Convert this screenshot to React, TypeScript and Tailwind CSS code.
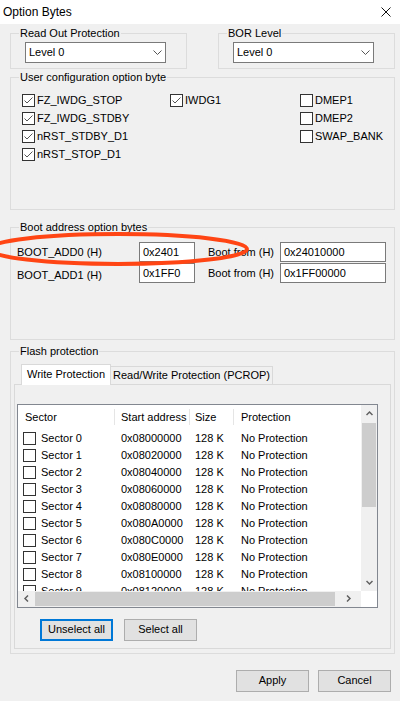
import React from "react";

type Kids = { children?: React.ReactNode };

const sectors = [
  "0x08000000",
  "0x08020000",
  "0x08040000",
  "0x08060000",
  "0x08080000",
  "0x080A0000",
  "0x080C0000",
  "0x080E0000",
  "0x08100000",
  "0x08120000",
];

function Check({ checked }: { checked?: boolean }) {
  return (
    <span className="w-[13px] h-[13px] border border-[#333333] bg-white flex items-center justify-center shrink-0">
      {checked && (
        <svg width="11" height="11" viewBox="0 0 11 11">
          <path d="M1.5 5.5 L4 8 L9.5 2.5" fill="none" stroke="#555555" strokeWidth="1" />
        </svg>
      )}
    </span>
  );
}

function Group({ title, className, children }: Kids & { title: string; className: string }) {
  return (
    <fieldset className={`border border-[#dcdcdc] ${className}`}>
      <legend className="ml-[8px] px-[1px] leading-[13px]">{title}</legend>
      {children}
    </fieldset>
  );
}

function Combo() {
  return (
    <div className="mt-[2px] ml-[14px] w-[141px] h-[21px] border border-[#7a7a7a] bg-white flex items-center justify-between pl-[3px] pr-[3px]">
      <span>Level 0</span>
      <svg width="9" height="5" viewBox="0 0 9 5">
        <path d="M0.5 0.5 L4.5 4.5 L8.5 0.5" fill="none" stroke="#555555" strokeWidth="1" />
      </svg>
    </div>
  );
}

function Option({ label, checked }: { label: string; checked?: boolean }) {
  return (
    <div className="h-[18px] flex items-center gap-[2px]">
      <Check checked={checked} />
      <span>{label}</span>
    </div>
  );
}

function Field({ value, w }: { value: string; w: string }) {
  return (
    <div className={`${w} h-[20px] border border-[#7a7a7a] bg-white flex items-center pl-[3px]`}>{value}</div>
  );
}

function Btn({ label, focus }: { label: string; focus?: boolean }) {
  return (
    <div
      className={`w-[73px] h-[22px] bg-[#e1e1e1] flex items-center justify-center ${
        focus ? "border-2 border-[#0078d7]" : "border border-[#adadad]"
      }`}
    >
      {label}
    </div>
  );
}

function Arrow({ d }: { d: string }) {
  return (
    <svg width="7" height="7" viewBox="0 0 7 7">
      <path d={d} fill="none" stroke="#606060" strokeWidth="1.5" />
    </svg>
  );
}

export default function App() {
  return (
    <div className="relative w-[400px] h-[701px] overflow-hidden bg-[#f0f0f0] text-black text-[11px] font-['Liberation_Sans',Arial,sans-serif]">
      {/* title bar */}
      <div className="h-[24px] bg-white flex items-center justify-between pl-[3px] pr-[9px]">
        <span className="text-[12px]">Option Bytes</span>
        <svg width="10" height="10" viewBox="0 0 10 10">
          <path d="M0.5 0.5 L9.5 9.5 M9.5 0.5 L0.5 9.5" stroke="#111111" strokeWidth="1" />
        </svg>
      </div>

      <div className="flex gap-[31px] ml-[10px] mt-[3px]">
        <Group title="Read Out Protection" className="w-[177px] pb-[5px]">
          <Combo />
        </Group>
        <Group title="BOR Level" className="w-[177px] pb-[5px]">
          <Combo />
        </Group>
      </div>

      <Group title="User configuration option byte" className="ml-[10px] mt-[2px] w-[385px] pb-[46px]">
        <div className="flex pt-[7px] pl-[11px]">
          <div className="w-[148px]">
            <Option label="FZ_IWDG_STOP" checked />
            <Option label="FZ_IWDG_STDBY" checked />
            <Option label="nRST_STDBY_D1" checked />
            <Option label="nRST_STOP_D1" checked />
          </div>
          <div className="w-[130px]">
            <Option label="IWDG1" checked />
          </div>
          <div>
            <Option label="DMEP1" />
            <Option label="DMEP2" />
            <Option label="SWAP_BANK" />
          </div>
        </div>
      </Group>

      <Group title="Boot address option bytes" className="ml-[10px] mt-[11px] w-[385px] pb-[55px]">
        <div className="flex flex-col gap-[1px] pt-[8px] pl-[6px]">
          <div className="flex items-center">
            <span className="w-[122px]">BOOT_ADD0 (H)</span>
            <Field value="0x2401" w="w-[56px]" />
            <span className="ml-[13px] w-[72px]">Boot from (H)</span>
            <Field value="0x24010000" w="w-[106px]" />
          </div>
          <div className="flex items-center">
            <span className="w-[122px] pt-[4px]">BOOT_ADD1 (H)</span>
            <Field value="0x1FF0" w="w-[56px]" />
            <span className="ml-[13px] w-[72px]">Boot from (H)</span>
            <Field value="0x1FF00000" w="w-[106px]" />
          </div>
        </div>
      </Group>

      <Group title="Flash protection" className="ml-[10px] mt-[5px] w-[385px] pb-[4px]">
        <div className="flex items-end mt-[6px] ml-[10px] h-[20px]">
          <div className="relative z-10 w-[90px] h-[21px] -mb-[1px] bg-white border border-b-0 border-[#d9d9d9] flex items-center justify-center">
            Write Protection
          </div>
          <div className="w-[162px] h-[18px] border border-b-0 border-l-0 border-[#d9d9d9] flex items-center justify-center">
            Read/Write Protection (PCROP)
          </div>
        </div>
        <div className="ml-[3px] w-[377px] border border-[#d9d9d9] pt-[19px] pl-[2px] pb-[7px]">
          <div className="w-[361px] border border-[#828790] bg-white">
            <div className="flex h-[186px]">
              <div className="flex-1 overflow-hidden">
                <div className="flex h-[25px] items-center">
                  <span className="w-[96px] pl-[7px]">Sector</span>
                  <span className="w-[75px] pl-[6px] border-l border-[#e5e5e5]">Start address</span>
                  <span className="w-[44px] pl-[5px] border-l border-[#e5e5e5]">Size</span>
                  <span className="pl-[7px] border-l border-[#e5e5e5]">Protection</span>
                </div>
                {sectors.map((addr, i) => (
                  <div key={addr} className="flex h-[17px] items-center">
                    <div className="w-[96px] pl-[5px] flex items-center gap-[5px]">
                      <Check />
                      <span>Sector {i}</span>
                    </div>
                    <span className="w-[75px] pl-[7px]">{addr}</span>
                    <span className="w-[44px] pl-[6px]">128 K</span>
                    <span className="pl-[8px]">No Protection</span>
                  </div>
                ))}
              </div>
              <div className="w-[16px] bg-[#f0f0f0] flex flex-col">
                <div className="h-[17px] flex items-center justify-center">
                  <Arrow d="M0.5 5 L3.5 2 L6.5 5" />
                </div>
                <div className="mt-[1px] h-[84px] mx-[1px] bg-[#cdcdcd]" />
                <div className="flex-1" />
                <div className="h-[17px] flex items-center justify-center">
                  <Arrow d="M0.5 2 L3.5 5 L6.5 2" />
                </div>
              </div>
            </div>
            <div className="flex h-[16px]">
              <div className="flex-1 bg-[#f0f0f0] flex items-center">
                <div className="w-[17px] flex justify-center">
                  <Arrow d="M5 0.5 L2 3.5 L5 6.5" />
                </div>
                <div className="w-[300px] h-[14px] bg-[#cdcdcd]" />
                <div className="flex-1 flex justify-center">
                  <Arrow d="M2 0.5 L5 3.5 L2 6.5" />
                </div>
              </div>
              <div className="w-[16px] bg-white" />
            </div>
          </div>
          <div className="flex gap-[11px] mt-[11px] ml-[23px]">
            <Btn label="Unselect all" focus />
            <Btn label="Select all" />
          </div>
        </div>
      </Group>

      <div className="flex justify-end gap-[9px] pr-[9px] mt-[16px]">
        <Btn label="Apply" />
        <Btn label="Cancel" />
      </div>

      {/* red highlight drawn over the boot address row */}
      <svg
        className="absolute left-0 top-[228px] pointer-events-none"
        width="260"
        height="45"
        viewBox="0 0 260 45"
      >
        <ellipse cx="118" cy="21" rx="129" ry="15" fill="none" stroke="#ff4514" strokeWidth="4" />
      </svg>
    </div>
  );
}
